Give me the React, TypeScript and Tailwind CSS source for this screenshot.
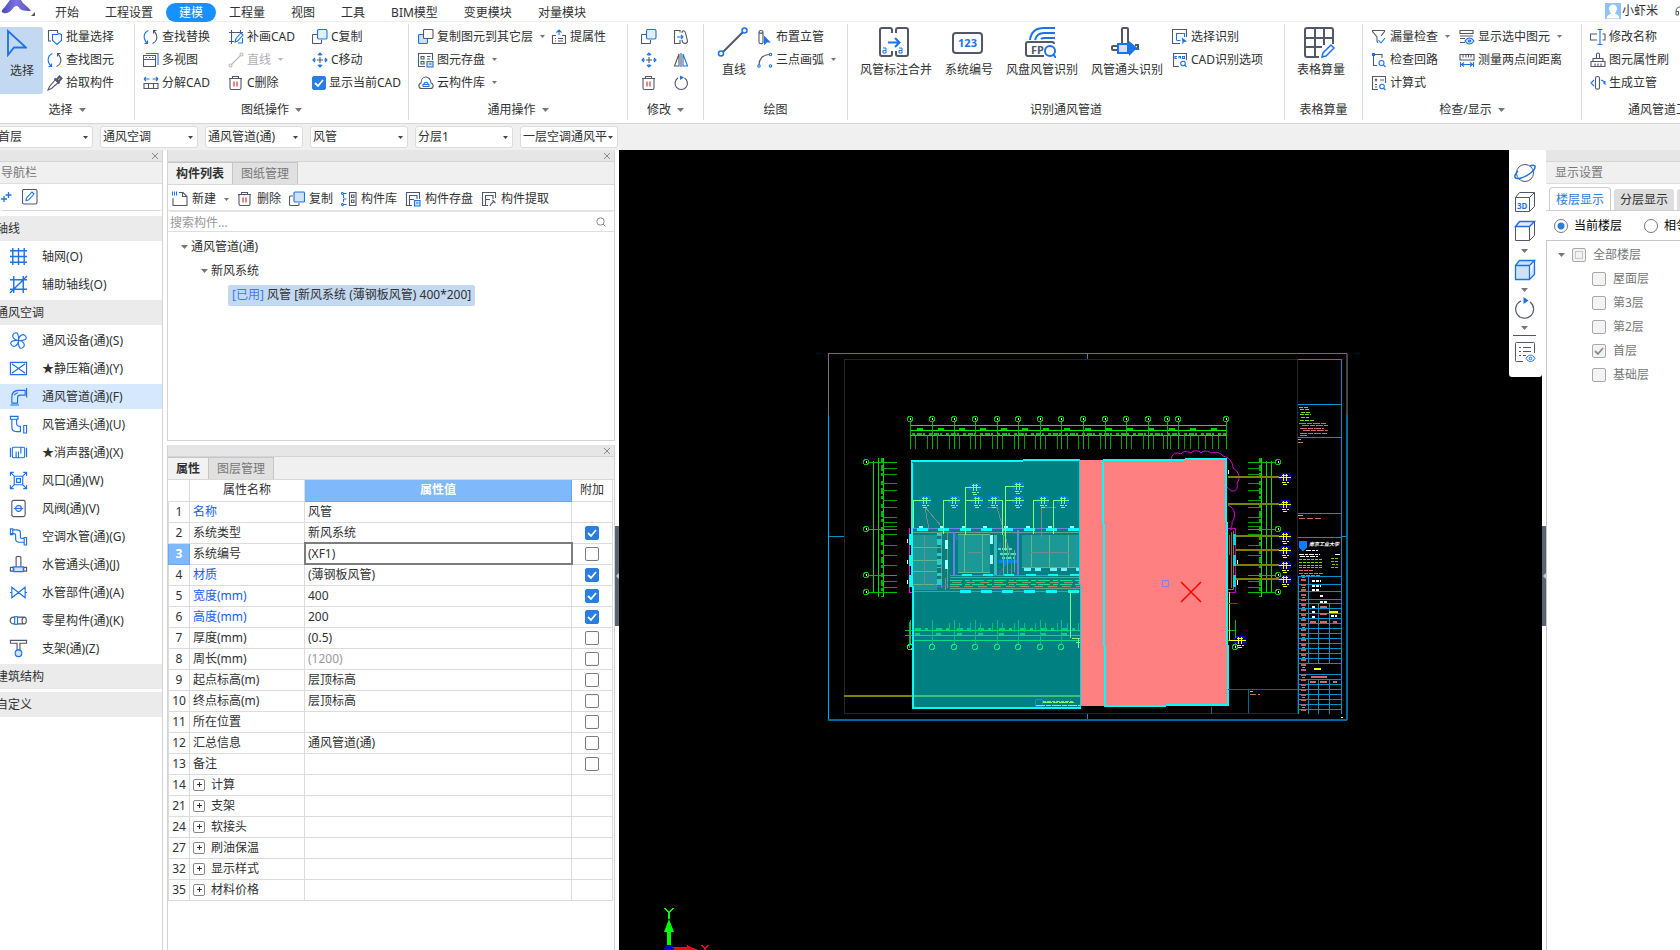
import React, { useState } from "react";

const D = "#52586b";
const B = "#1a73e8";

const icons: Record<string, React.ReactNode> = {
  batch: (
    <>
      <path d="M4 12H1.500V1.500h9V4" stroke={D} />
      <path d="M5.500 5.500h5l1-1 3 1v6l-4.500 4-4.500-4z" stroke={B} fill="#fff" />
    </>
  ),
  find: (
    <>
      <path d="M5.500 1.500C2 3 .5 6 1.500 10c.5 2 1.500 3 3 4.500M1.500 14.500h3v-3" stroke={B} />
      <path d="M9.500 14.500c3.500-1.500 5-4.500 4-8.500-.5-2-1.500-3-3-4.500M13.500 1.500h-3v3" stroke={D} />
    </>
  ),
  dropper: (
    <>
      <path d="M9 4l3 3L4.500 13.500 1 15l1.500-3.500z" stroke={D} />
      <path d="M7.500 3.500l5 5M9.500 5l3-3.500 2 2L11 7z" stroke={D} strokeWidth="2" />
    </>
  ),
  multi: (
    <>
      <path d="M3 1.500h12V13" stroke={B} />
      <path d="M.500 3.500h12v11h-12zM.500 7.500h12M2.500 5.500h1.500M6 5.500h1.500M9 5.500h1.500" stroke={D} />
    </>
  ),
  explode: (
    <>
      <path d="M6.500 4H1m0 0l2-2M1 4l2 2M9.500 4H15m0 0l-2-2M15 4l-2 2" stroke={B} />
      <path d="M1 8.500h14v5H1zM5.500 8.500v5M10.500 8.500v5" stroke={D} />
    </>
  ),
  patch: (
    <>
      <path d="M3.500 1v14M1 3.500h14M12.500 1v3M1 12.500h5" stroke={D} />
      <path d="M7 13l1-3.500L13 4l2 2-5.500 6zM10 14h4.500V9" stroke={B} />
    </>
  ),
  lineOff: (
    <>
      <path d="M3.500 12.500l9-9" stroke="#b8b8b8" />
      <circle cx="2.500" cy="13.500" r="1.500" stroke="#b8b8b8" />
      <circle cx="13.500" cy="2.500" r="1.500" stroke="#b8b8b8" />
    </>
  ),
  trash: (
    <>
      <path d="M1 3.500h13M4.500 3V1.500h6V3M2 4v9q0 1.500 1.500 1.500h8q1.500 0 1.500-1.500V4" stroke={D} />
      <path d="M6 6.500v5M9 6.500v5" stroke="#e02020" />
    </>
  ),
  copy: (
    <>
      <path d="M6 5.500H1q-.5 0-.5.500v8q0 .500.500.500h8q.5 0 .5-.500V11" stroke={D} />
      <rect x="5.500" y=".500" width="9.500" height="9.500" rx="1.500" stroke={B} fill="#e3eefc" />
    </>
  ),
  copyFloor: (
    <>
      <rect x=".500" y="5.500" width="9" height="9" rx="1" stroke={B} fill="#cfe1fb" />
      <rect x="5.500" y=".500" width="9.500" height="9" rx="1" stroke={D} fill="#fff" />
    </>
  ),
  move: (
    <>
      <path d="M8 5v6M5 8h6" stroke={D} />
      <path d="M8 4V1M6 3l2-2 2 2M8 12v3M6 13l2 2 2-2M4 8H1M3 6L1 8l2 2M12 8h3M13 6l2 2-2 2" stroke={B} />
    </>
  ),
  lift: (
    <>
      <path d="M8 6V1M5.500 3.500L8 1l2.500 2.500" stroke={B} />
      <path d="M5 6.500H1.500v8h13v-8H11M4 9.500h1M7 9.500h5M4 12h1M7 12h5" stroke={D} />
    </>
  ),
  save: (
    <>
      <path d="M7 14.500H.500v-13h14V8M3 4.500h3v2.500H3zM9 4.500h3.500M9 7h3M3 9.500h3V12H3z" stroke={D} />
      <path d="M9 9.500h6v5.500H9zM11 12h2.500" stroke={B} fill="#cfe1fb" />
    </>
  ),
  cloud: (
    <>
      <path d="M4 13.500C0 13.500 0 9 3 8 3 0 12 0 13 8c3 1 3 5.500-1 5.500z" stroke={D} />
      <path d="M5 11.500h6v-2H5zM6 9.500c0-3 4-3 4 0" stroke={B} />
    </>
  ),
  stretch: (
    <>
      <path d="M7 3.500V1.500H1.500v13H7V11" stroke={D} />
      <path d="M9 4c0-3 3-3 3.500 0l2 8c0 3-4 3-5 1l-.5-2" stroke={D} />
      <path d="M4 8h6M8 6l2 2-2 2" stroke={B} />
    </>
  ),
  mirror: (
    <>
      <path d="M6 2v12H1.500z" stroke={D} />
      <path d="M10 2v12h4.500z" stroke={B} />
      <path d="M8 1v14" stroke={D} />
    </>
  ),
  rotate: (
    <>
      <path d="M5 3a6.200 6.200 0 1 0 6.500 0" stroke={D} />
      <path d="M7 .500L11 2.500 7 5z" fill={B} stroke="none" />
    </>
  ),
  pipe: (
    <>
      <path d="M2 3v10.500c0 1.500 4 1.500 4 0V3c0-2-4-2-4 0zm0 0c0 1.500 4 1.500 4 0" stroke={D} />
      <path d="M7.500 8l5 5-3 0-2 2z" fill={B} stroke={B} />
    </>
  ),
  arc: (
    <>
      <path d="M2 13C2 7 6 2.500 12 2.500" stroke={D} />
      <circle cx="2" cy="14" r="1.200" stroke={B} />
      <circle cx="13.500" cy="2.500" r="1.200" stroke={B} />
      <circle cx="13.500" cy="14" r="1.200" stroke={B} />
    </>
  ),
  pickRec: (
    <>
      <path d="M8 14.500H.500V.500h14V8" stroke={D} />
      <path d="M4.500 11V4.500h8V8M4.500 11.500h4" stroke={B} />
      <path d="M10 8.500l5 4-3 .5-1.500 2.500z" fill={B} stroke="none" />
    </>
  ),
  cadOpt: (
    <>
      <path d="M7 14.500H1.500v-13h13V8" stroke={D} />
      <path d="M5 4.500H3v2h2M7 6.500v-2h1.500v2M10.500 4.500h2v2h-2z" stroke={B} />
      <circle cx="11" cy="11.500" r="2.300" stroke={B} />
      <path d="M12.500 13l2 2" stroke={B} />
    </>
  ),
  filter: (
    <>
      <path d="M7 14L6 12V8L1.500 2.500v-1h12v1L10 7" stroke={D} />
      <path d="M7.500 11l2.500 3 4-5" stroke={B} />
    </>
  ),
  loop: (
    <>
      <path d="M6 13.500H2.500v-11H11V6" stroke={D} />
      <path d="M1 1h3v3H1z" fill={B} stroke="none" />
      <circle cx="10.500" cy="11" r="2.500" stroke={B} />
      <path d="M12.500 13l2 2" stroke={B} />
    </>
  ),
  formula: (
    <>
      <path d="M7 14.500H1.500v-13h13V8M4 4l2 2M6 4L4 6M9 5h4M4 9.500h2M4 12h2" stroke={D} />
      <circle cx="11" cy="11.500" r="2.300" stroke={B} />
      <path d="M13 13.500l1.500 1.500" stroke={B} />
    </>
  ),
  showSel: (
    <>
      <path d="M1 1.500h13v3H1zM1 7h13M6 9.500H1M6 13.500H1" stroke={D} />
      <path d="M6 12c2.500-4 6.500-4 9 0-2.500 4-6.500 4-9 0z" stroke={B} fill="#cfe1fb" />
      <circle cx="10.500" cy="12" r="1" stroke={B} />
    </>
  ),
  measure: (
    <>
      <path d="M1 2.500h14v5.500H1zM4 3v2.500M7 3v2.500M9.500 3v2.500M12 3v2.500" stroke={D} />
      <path d="M1.500 10v5M14.500 10v5M2 12.500h12M5 10.500l-2.500 2 2.500 2M11 10.500l2.500 2-2.500 2" stroke={B} />
    </>
  ),
  rename: (
    <>
      <path d="M7 5H.500v6H7M12.500 5H15v6h-2.500" stroke={D} />
      <path d="M10 1v14M7.500 .500h5M7.500 15.500h5" stroke={B} />
    </>
  ),
  brush: (
    <path d="M6.500 6V2.500c0-2 3-2 3 0V6M3 6.500h10v3H3zM1 9.500h14v5H1zM5 14v-2.500M8 14v-2.500M11 14v-2.500" stroke={D} />
  ),
  riser: (
    <>
      <path d="M5.500 3v10c0 1.500 4 1.500 4 0V3c0-2-4-2-4 0z" stroke={D} />
      <path d="M4 5L1 8l3 3M11 5c3 1 4 2 4 4l-1.500-1.500M15 9V6" stroke={B} />
    </>
  ),
  newDoc: (
    <>
      <path d="M7 1.500h4l4 4v9H1V7M10.500 1.500v4H15" stroke={D} />
      <path d="M0 1.500h5M0 3.500h5" stroke={B} strokeWidth="2" strokeDasharray="1 1" />
    </>
  ),
  copyBlue: (
    <>
      <path d="M4 5H1.500q-1 0-1 1v7.500q0 1 1 1H9q1 0 1-1V12" stroke={D} />
      <rect x="5" y="1" width="10.500" height="10" rx="1" stroke={B} fill="#cfe1fb" />
    </>
  ),
  lib: (
    <>
      <path d="M2.500 2.500h4M2.500 8h4M2.500 13.500h4M2.500 4v8" stroke={B} strokeDasharray="3 1" />
      <circle cx="1.500" cy="2.500" r="1" stroke={B} />
      <circle cx="1.500" cy="13.500" r="1" stroke={B} />
      <path d="M8.500 1.500H15v13H8.500zM10.500 4H13v2.500h-2.500zM10.500 9H13v2.500h-2.500z" stroke={D} />
    </>
  ),
  disk: (
    <>
      <path d="M7 14.500H1.500v-13h13V8M4.500 14V4.500H12V8M4.500 8.500H9" stroke={D} />
      <path d="M9.500 9.500H15V15H9.500zM11 12h2.500" stroke={B} fill="#cfe1fb" />
    </>
  ),
  extract: (
    <>
      <path d="M7 14.500H1.500v-13h13V7M4.500 14V4.500H12V8M4.500 8.500H9" stroke={D} />
      <path d="M9 15l1-2 3-3M11.500 9l3 3" stroke={D} />
    </>
  ),
  plusPlus: <path d="M4 7v6M1 10h6M8.500 3v6M5.500 6h6" stroke={B} strokeWidth="1.300" />,
  editBox: (
    <>
      <rect x=".500" y=".500" width="14.500" height="14.500" rx="1.500" stroke={D} />
      <path d="M4 11.500l.5-2.500 5.500-6 2 2-5.500 6z" stroke={B} />
    </>
  ),
};

// icons of the navigation list, drawn on a 20px grid
const navIcons: Record<string, React.ReactNode> = {
  grid: <path d="M4 1v18M10 1v18M16 1v18M1 4h18M1 10h18M1 16h18" stroke={B} strokeWidth="1.500" />,
  gridAux: <path d="M5 1v18M15 1v18M1 5h18M1 15h18M1 19L19 1" stroke={B} strokeWidth="1.500" />,
  fan: (
    <path
      d="M10 10C5 10 2 5 5.500 2.500 9 0 10.500 5 10 10zm0 0c0-5 5-8 7.500-4.500S15 10.500 10 10zm0 0c5 0 8 5 4.500 7.500S9.500 15 10 10zm0 0c0 5-5 8-7.500 4.500S5 9.500 10 10z"
      stroke={B}
    />
  ),
  box: <path d="M1.500 3.500h17v13h-17zM3 5l14 10M17 5L3 15" stroke={B} />,
  duct: <path d="M1.500 19h9M3 17v-6.500C3 6 6 3.500 10 3.500h7v5h-5c-2 0-3 1-3 3V17zM18.500 1v10M5.500 8.500c1-1.500 2-2 4-2.500" stroke={B} />,
  elbow: <path d="M1.500 1.500h8v3h-8zM3 5v8c0 3 2 4.500 5 4.500h4v-5.500c-3 0-4-1-4-3V5M15.500 11h3v8h-3z" stroke={B} />,
  silencer: <path d="M1.500 5v10M18.500 5v10M5 4.500h10q1.500 0 1.500 1.500v8q0 1.500-1.500 1.500H5q-1.500 0-1.500-1.500V6q0-1.500 1.500-1.500zM7.500 9v6M10 9v6M12.500 5v6" stroke={B} />,
  vent: <path d="M1.500 5V1.500H5M15 1.500h3.500V5M18.500 15v3.500H15M5 18.500H1.500V15M2 2l4 4M18 2l-4 4M2 18l4-4M18 18l-4-4M5.500 5.500h9v9h-9zM8 8h4v4H8z" stroke={B} />,
  valve: (
    <>
      <rect x="3" y="1.500" width="14" height="17" rx="2" stroke={D} />
      <circle cx="10" cy="10" r="3" stroke={B} />
      <path d="M5 10h10" stroke={B} />
    </>
  ),
  water: <path d="M1.500 2v6M4 3h4c3 0 4 1 4 3v5c0 1 .5 1 2 1h2M2 7h3c1.500 0 2 .5 2 2v4c0 2 1 3 4 3h5M16 11v8h2.500v-8zM1.500 2H4v6H1.500z" stroke={B} />,
  tee: (
    <>
      <path d="M7.500 12V3c0-2 5-2 5 0v9M1.500 13h3v4h-3zM15.500 13h3v4h-3z" stroke={D} />
      <path d="M5 12.500h10v5H5z" stroke={B} fill="#cfe1fb" />
    </>
  ),
  butterfly: <path d="M1 10h2M17 10h2M3 4.500l14 11v-11L3 15.500z" stroke={B} />,
  misc: (
    <>
      <path d="M5 6.500h11c3 0 3 7 0 7H5c-5 0-5-7 0-7zM16 6.500c-3 0-3 7 0 7" stroke={D} />
      <path d="M6 6h3v8H6z" stroke={B} fill="#fff" />
    </>
  ),
  hanger: (
    <>
      <path d="M1.500 1.500h17v3h-7V12h-3V4.500h-7z" stroke={D} />
      <circle cx="10" cy="15" r="3.500" stroke={B} fill="#cfe1fb" />
    </>
  ),
};

const Icon = ({ name }: { name: string }) => (
  <svg className="w-4 h-4 shrink-0" viewBox="0 0 16 16" fill="none" strokeWidth="1.100" aria-hidden="true">
    {icons[name]}
  </svg>
);

const Caret = () => (
  <svg className="w-[7px] h-1 shrink-0" viewBox="0 0 7 4" aria-hidden="true">
    <path d="M0 0h7L3.500 4z" fill="#777" />
  </svg>
);

const SmallCaret = ({ light = false }: { light?: boolean }) => (
  <svg className="w-[5px] h-[3px] ml-1 shrink-0" viewBox="0 0 5 3" aria-hidden="true">
    <path d="M0 0h5L2.500 3z" fill={light ? "#b8b8b8" : "#777"} />
  </svg>
);

interface CheckProps {
  id: string;
  label?: string;
  initial?: boolean;
  disabled?: boolean;
  partial?: boolean;
}

const Check = ({ id, label, initial = false, disabled = false, partial = false }: CheckProps) => {
  const [checked, setChecked] = useState(initial);
  return (
    <span className="grid w-[14px] h-[14px] shrink-0">
      <input
        id={id}
        type="checkbox"
        aria-label={label}
        disabled={disabled}
        checked={checked}
        onChange={(e) => setChecked(e.target.checked)}
        className="[grid-area:1/1] appearance-none w-[14px] h-[14px] rounded-[2px] border border-[#7d7d7d] bg-white checked:bg-[#2a7de1] checked:border-[#2a7de1] disabled:border-[#a8a8a8] disabled:bg-[#f3f3f3] disabled:checked:bg-[#f3f3f3] disabled:checked:border-[#a8a8a8]"
      />
      {checked && (
        <svg className="[grid-area:1/1] w-[14px] h-[14px] pointer-events-none" viewBox="0 0 14 14" fill="none">
          <path d="M3 7l3 3 5-6" stroke={disabled ? "#8c8c8c" : "#fff"} strokeWidth="1.800" />
        </svg>
      )}
      {partial && <span className="[grid-area:1/1] m-[3px] border border-[#c8c8c8] pointer-events-none"></span>}
    </span>
  );
};

interface ToolProps {
  icon: string;
  text?: string;
  caret?: boolean;
  off?: boolean;
  roomy?: boolean;
}

const Tool = ({ icon, text, caret, off, roomy }: ToolProps) => (
  <button
    disabled={off}
    aria-label={text ? undefined : icon}
    className={`flex items-center h-[23px] whitespace-nowrap ${roomy ? "gap-1" : "gap-[3px]"} ${
      off ? "text-[#b0b0b0]" : ""
    }`}
  >
    <Icon name={icon} />
    {text && <span>{text}</span>}
    {caret && <SmallCaret light={off} />}
  </button>
);

interface BigToolProps {
  text: string;
  children: React.ReactNode;
}

const BigTool = ({ text, children }: BigToolProps) => (
  <button className="flex flex-col items-center h-[69px] whitespace-nowrap">
    <svg className="w-8 h-8 mt-[2px] mb-1 mr-1" viewBox="0 0 32 32" fill="none" strokeWidth="2" aria-hidden="true">
      {children}
    </svg>
    <span className="leading-4">{text}</span>
  </button>
);

interface GroupProps {
  title: string;
  width: string;
  caret?: boolean;
  children: React.ReactNode;
}

const Group = ({ title, width, caret, children }: GroupProps) => (
  <section className={`${width} my-[2px] h-[96px] flex flex-col border-r border-[#dcdcdc] shrink-0`}>
    <div className="flex h-[76px]">{children}</div>
    <h2 className="flex items-center justify-center gap-[6px] h-5 whitespace-nowrap">
      {title}
      {caret && <Caret />}
    </h2>
  </section>
);

const menus = ["开始", "工程设置", "建模", "工程量", "视图", "工具", "BIM模型", "变更模块", "对量模块"];

const MenuBar = () => (
  <header className="flex items-center h-[22px] border-b border-[#eeeeee]">
    <svg className="w-[42px] h-[21px] shrink-0" viewBox="0 0 42 21" aria-hidden="true">
      <defs>
        <linearGradient id="logo" x1="0" x2="1">
          <stop offset="0" stopColor="#4a48b8" />
          <stop offset="0.500" stopColor="#7d73e0" />
          <stop offset="1" stopColor="#5853b5" />
        </linearGradient>
      </defs>
      <path d="M10 0H21L23 3c2 2 5 4 8 8-4 0-8 0-11-2-2-3-3-4-6-2C11 11 8 14 4 13 1 13 1 10 4 8z" fill="url(#logo)" />
      <path d="M35 12v4h-4z" fill="#555" />
    </svg>
    <nav className="flex items-center">
      {menus.map((m) => (
        <button
          key={m}
          className={`px-[13px] h-[19px] mt-[3px] rounded-full leading-[19px] whitespace-nowrap ${
            m === "建模" ? "bg-[#1890ff] text-white" : ""
          }`}
        >
          {m}
        </button>
      ))}
    </nav>
    <div className="ml-auto flex items-center pt-px whitespace-nowrap">
      <svg className="w-4 h-4 mr-px" viewBox="0 0 16 16" aria-hidden="true">
        <rect width="16" height="16" fill="#8fc3f8" />
        <path d="M4 6c0-6 8-6 8 0 1 0 0 1-.5 1-.5 3-1.500 3-1.500 4 3 .5 4 2 4.500 4.500h-13C2 13 3 11.500 6 11c0-1-1-1-1.500-4C4 7 3 6 4 6z" fill="#fff" />
      </svg>
      <span>小虾米</span>
      <svg className="w-[6px] h-4 ml-4" viewBox="0 0 6 16" fill="none" aria-hidden="true">
        <path d="M6 4Q2 4 2 9v3h2.500V8.500H2" stroke={D} />
      </svg>
    </div>
  </header>
);

const Ribbon = () => (
  <div className="flex h-[102px] border-b border-[#d6d6d6] overflow-hidden">
    <Group title="选择" width="w-[135px]" caret>
      <button className="flex flex-col items-start w-[43px] h-[67px] mt-[3px] pl-[7px] bg-[#c3d9f1] rounded-r-[3px] shrink-0">
        <svg className="w-5 h-7 mt-[2px]" viewBox="0 0 20 28" fill="none" aria-hidden="true">
          <path d="M1 2v24l6-7.500h12z" stroke={B} strokeWidth="1.800" />
        </svg>
        <span className="pl-[3px] mt-[6px] leading-4">选择</span>
      </button>
      <div className="pl-1 pt-px">
        <Tool icon="batch" text="批量选择" />
        <Tool icon="find" text="查找图元" />
        <Tool icon="dropper" text="拾取构件" />
      </div>
    </Group>
    <Group title="图纸操作" width="w-[274px]" caret>
      <div className="pl-2 pt-px w-[93px]">
        <Tool icon="find" text="查找替换" />
        <Tool icon="multi" text="多视图" />
        <Tool icon="explode" text="分解CAD" />
      </div>
      <div className="pt-px w-[84px]">
        <Tool icon="patch" text="补画CAD" />
        <Tool icon="lineOff" text="直线" caret off />
        <Tool icon="trash" text="C删除" />
      </div>
      <div className="pt-px">
        <Tool icon="copy" text="C复制" />
        <Tool icon="move" text="C移动" />
        <div className="flex items-center gap-[3px] h-[23px] whitespace-nowrap">
          <Check id="show-cad" initial />
          <label htmlFor="show-cad">显示当前CAD</label>
        </div>
      </div>
    </Group>
    <Group title="通用操作" width="w-[219px]" caret>
      <div className="pl-[9px] pt-px w-[142px]">
        <Tool icon="copyFloor" text="复制图元到其它层" caret />
        <Tool icon="save" text="图元存盘" caret />
        <Tool icon="cloud" text="云构件库" caret />
      </div>
      <div className="pt-px">
        <Tool icon="lift" text="提属性" />
      </div>
    </Group>
    <Group title="修改" width="w-[76px]" caret>
      <div className="pl-[13px] pt-px w-[45px]">
        <Tool icon="copy" />
        <Tool icon="move" />
        <Tool icon="trash" />
      </div>
      <div className="pt-px">
        <Tool icon="stretch" />
        <Tool icon="mirror" />
        <Tool icon="rotate" />
      </div>
    </Group>
    <Group title="绘图" width="w-[144px]">
      <div className="pl-3 w-[53px]">
        <BigTool text="直线">
          <path d="M7 26L27 6" stroke={D} />
          <circle cx="5" cy="27.500" r="2.500" stroke={B} strokeWidth="1.500" />
          <circle cx="28.500" cy="4.500" r="2.500" stroke={B} strokeWidth="1.500" />
        </BigTool>
      </div>
      <div className="pt-px">
        <Tool icon="pipe" text="布置立管" />
        <Tool icon="arc" text="三点画弧" caret />
      </div>
    </Group>
    <Group title="识别通风管道" width="w-[437px]">
      <div className="flex pl-3 gap-[13px] w-[324px]">
        <BigTool text="风管标注合并">
          <path d="M14 7V4q0-2-2-2H4Q2 2 2 4v24q0 2 2 2h8q2 0 2-2v-3M18 7V4q0-2 2-2h8q2 0 2 2v24q0 2-2 2h-8q-2 0-2-2v-3" stroke={D} />
          <path d="M10 16.500h11M17 12l4.500 4.500L17 21" stroke={B} />
          <path d="M5 22h3v5H5v-2.500h3M21 22h3v5h-3v-2.500h3" stroke={B} strokeWidth="1" />
        </BigTool>
        <BigTool text="系统编号">
          <rect x="2" y="7" width="29" height="20" rx="3" stroke={D} />
          <text x="16.500" y="21" fontSize="11" fontWeight="bold" textAnchor="middle" fill={B} stroke="none">
            123
          </text>
        </BigTool>
        <BigTool text="风盘风管识别">
          <path d="M6 14C7 6 12 2 20 2h11M11 14c1-4 4-7 9-7h11M17 13c1-1 2-1 4-1h10" stroke={B} />
          <path d="M20 30H4q-2 0-2-2V18q0-2 2-2h24q2 0 2 2" stroke={D} />
          <text x="7" y="27.500" fontSize="11" fontWeight="bold" fill={D} stroke="none">
            FP
          </text>
          <circle cx="26" cy="25" r="5" stroke={B} fill="#fff" />
          <path d="M29 28l3 4" stroke={B} />
        </BigTool>
        <BigTool text="风管通头识别">
          <path d="M13 18V3q0-1 1-1h4q1 0 1 1v15M9 20H4q-1 0-1 1v2q0 1 1 1h5" stroke={D} />
          <path d="M9 18h10v9H9z" stroke={B} fill="#cfe1fb" />
          <path d="M20 15l11 9h-5l-6 6z" fill={B} />
          <path d="M26 19h3v4" stroke={D} />
        </BigTool>
      </div>
      <div className="pt-px">
        <Tool icon="pickRec" text="选择识别" />
        <Tool icon="cadOpt" text="CAD识别选项" />
      </div>
    </Group>
    <Group title="表格算量" width="w-[78px]">
      <div className="pl-3">
        <BigTool text="表格算量">
          <path d="M16 31H4q-2 0-2-2V4q0-2 2-2h24q2 0 2 2v14M2 12h28M2 21h17M12 2v28M21 2v17" stroke={D} />
          <path d="M19 31l1-4 8-8 3 3-8 8z" stroke={B} strokeWidth="1.500" />
        </BigTool>
      </div>
    </Group>
    <Group title="检查/显示" width="w-[219px]" caret>
      <div className="pl-2 pt-px w-[96px]">
        <Tool icon="filter" text="漏量检查" caret />
        <Tool icon="loop" text="检查回路" />
        <Tool icon="formula" text="计算式" />
      </div>
      <div className="pt-px">
        <Tool icon="showSel" text="显示选中图元" caret />
        <Tool icon="measure" text="测量两点间距离" />
      </div>
    </Group>
    <section className="my-[2px] h-[96px] flex flex-col flex-1 min-w-0 overflow-hidden">
      <div className="flex flex-col h-[76px] pl-2 pt-px">
        <Tool icon="rename" text="修改名称" />
        <Tool icon="brush" text="图元属性刷" />
        <Tool icon="riser" text="生成立管" />
      </div>
      <h2 className="h-5 pl-[46px] leading-5 whitespace-nowrap">通风管道工具</h2>
    </section>
  </div>
);

const combos = ["首层", "通风空调", "通风管道(通)", "风管", "分层1", "一层空调通风平"];

const ComboBar = () => (
  <div className="flex items-center gap-[7px] h-[26px] bg-[#f0f0f0] overflow-hidden">
    {combos.map((c, i) => (
      <div
        key={c}
        className={`grid items-center w-[98px] h-[22px] bg-white border border-[#dcdcdc] rounded-[3px] shrink-0 ${
          i === 0 ? "-ml-[5px]" : ""
        }`}
      >
        <select aria-label={c} className="[grid-area:1/1] w-full h-5 pl-[2px] pr-2 appearance-none bg-transparent">
          <option>{c}</option>
        </select>
        <svg className="[grid-area:1/1] w-[5px] h-[3px] justify-self-end mr-1 pointer-events-none" viewBox="0 0 5 3">
          <path d="M0 0h5L2.500 3z" fill="#444" />
        </svg>
      </div>
    ))}
  </div>
);

const PanelBar = ({ name }: { name: string }) => (
  <div className="flex items-center justify-end h-3 pr-[3px] bg-[#e6e6e6] border-b border-[#d4d4d4] shrink-0">
    {name && (
      <button aria-label={`关闭${name}`} className="w-2 h-2">
        <svg className="w-2 h-2" viewBox="0 0 8 8" fill="none">
          <path d="M1 1l6 6M7 1L1 7" stroke="#8a8a8a" />
        </svg>
      </button>
    )}
  </div>
);

const nav = [
  { text: "轴线" },
  { text: "轴网(O)", icon: "grid" },
  { text: "辅助轴线(O)", icon: "gridAux" },
  { text: "通风空调" },
  { text: "通风设备(通)(S)", icon: "fan" },
  { text: "★静压箱(通)(Y)", icon: "box" },
  { text: "通风管道(通)(F)", icon: "duct" },
  { text: "风管通头(通)(U)", icon: "elbow" },
  { text: "★消声器(通)(X)", icon: "silencer" },
  { text: "风口(通)(W)", icon: "vent" },
  { text: "风阀(通)(V)", icon: "valve" },
  { text: "空调水管(通)(G)", icon: "water" },
  { text: "水管通头(通)(J)", icon: "tee" },
  { text: "水管部件(通)(A)", icon: "butterfly" },
  { text: "零星构件(通)(K)", icon: "misc" },
  { text: "支架(通)(Z)", icon: "hanger" },
  { text: "建筑结构" },
  { text: "自定义" },
];

const NavPanel = () => {
  const [current, setCurrent] = useState("通风管道(通)(F)");
  return (
    <aside className="flex flex-col w-[163px] border-r border-[#d4d4d4] shrink-0">
      <PanelBar name="导航栏" />
      <h2 className="h-[22px] pl-px leading-[22px] bg-[#f0f0f0] border-b border-[#dedede] text-[#777]">导航栏</h2>
      <div className="flex items-center gap-[6px] h-[27px] border-b border-[#d8d8d8] rounded-b-[3px]">
        <button aria-label="添加">
          <Icon name="plusPlus" />
        </button>
        <button aria-label="编辑">
          <Icon name="editBox" />
        </button>
      </div>
      <div className="flex flex-col gap-[3px] pt-[5px] overflow-hidden">
        {nav.map((n) =>
          n.icon ? (
            <button
              key={n.text}
              onClick={() => setCurrent(n.text)}
              className={`flex items-center gap-[14px] h-[25px] pl-[9px] shrink-0 whitespace-nowrap ${
                current === n.text ? "bg-[#d5e8fe]" : ""
              }`}
            >
              <svg className="w-[19px] h-[19px] shrink-0" viewBox="0 0 20 20" fill="none" strokeWidth="1.200" aria-hidden="true">
                {navIcons[n.icon]}
              </svg>
              {n.text}
            </button>
          ) : (
            <h3 key={n.text} className="h-[25px] leading-[25px] bg-[#ebebeb] shrink-0 overflow-hidden">
              <span className="-ml-1">{n.text}</span>
            </h3>
          )
        )}
      </div>
    </aside>
  );
};

interface TabsProps {
  items: string[];
}

const Tabs = ({ items }: TabsProps) => (
  <div className="flex h-[23px] bg-[#f0f0f0] border-b border-[#d8d8d8] shrink-0" role="tablist">
    {items.map((t, i) => (
      <button
        key={t}
        role="tab"
        aria-selected={i === 0}
        className={`px-2 border-r border-t border-[#c4c6ca] leading-[21px] ${
          i === 0 ? "font-bold bg-[#f2f2f2]" : "bg-[#e0e0e0] text-[#777]"
        }`}
      >
        {t}
      </button>
    ))}
  </div>
);

const ComponentPanel = () => (
  <section className="flex flex-col h-[291px] border border-t-0 border-[#d4d4d4] shrink-0">
    <PanelBar name="构件列表" />
    <Tabs items={["构件列表", "图纸管理"]} />
    <div className="flex items-center gap-2 h-[27px] pl-1 pt-[3px] border-b-2 border-[#e4e4e4] rounded-b-[3px] shrink-0">
      <Tool icon="newDoc" text="新建" caret roomy />
      <Tool icon="trash" text="删除" roomy />
      <Tool icon="copyBlue" text="复制" roomy />
      <Tool icon="lib" text="构件库" roomy />
      <Tool icon="disk" text="构件存盘" roomy />
      <Tool icon="extract" text="构件提取" roomy />
    </div>
    <div className="flex items-center h-[20px] pl-[2px] pr-2 pt-px border-b border-[#dedede] shrink-0">
      <input aria-label="搜索构件" placeholder="搜索构件..." className="flex-1 h-[18px] pt-px outline-none placeholder:text-[#999]" />
      <svg className="w-[10px] h-[10px]" viewBox="0 0 10 10" fill="none" stroke="#8a8a8a" aria-hidden="true">
        <circle cx="4.500" cy="4.500" r="3.700" />
        <path d="M7 7l2.500 2.500" />
      </svg>
    </div>
    <ul className="pt-[3px]">
      <li className="flex items-center gap-[3px] h-6 pl-[13px]">
        <Caret />
        通风管道(通)
      </li>
      <li className="flex items-center gap-[3px] h-6 pl-[33px]">
        <Caret />
        新风系统
      </li>
      <li className="flex items-center h-6 pl-[60px]">
        <button className="h-[21px] px-1 rounded-[2px] bg-[#c3d9f1] whitespace-nowrap">
          <span className="text-[#3d7be8]">[已用]</span> 风管 [新风系统 (薄钢板风管) 400*200]
        </button>
      </li>
    </ul>
  </section>
);

interface Prop {
  no: number;
  name: string;
  value?: string;
  add?: boolean;
  blue?: boolean;
  group?: boolean;
}

const props: Prop[] = [
  { no: 1, name: "名称", value: "风管", blue: true },
  { no: 2, name: "系统类型", value: "新风系统", add: true },
  { no: 3, name: "系统编号", value: "(XF1)", add: false },
  { no: 4, name: "材质", value: "(薄钢板风管)", add: true, blue: true },
  { no: 5, name: "宽度(mm)", value: "400", add: true, blue: true },
  { no: 6, name: "高度(mm)", value: "200", add: true, blue: true },
  { no: 7, name: "厚度(mm)", value: "(0.5)", add: false },
  { no: 8, name: "周长(mm)", value: "(1200)", add: false },
  { no: 9, name: "起点标高(m)", value: "层顶标高", add: false },
  { no: 10, name: "终点标高(m)", value: "层顶标高", add: false },
  { no: 11, name: "所在位置", add: false },
  { no: 12, name: "汇总信息", value: "通风管道(通)", add: false },
  { no: 13, name: "备注", add: false },
  { no: 14, name: "计算", group: true },
  { no: 21, name: "支架", group: true },
  { no: 24, name: "软接头", group: true },
  { no: 27, name: "刷油保温", group: true },
  { no: 32, name: "显示样式", group: true },
  { no: 35, name: "材料价格", group: true },
];

const PropertyPanel = () => (
  <section className="flex flex-col flex-1 mt-1 border-x border-[#d4d4d4] overflow-hidden">
    <PanelBar name="属性" />
    <Tabs items={["属性", "图层管理"]} />
    <table className="w-[445px] table-fixed border-collapse leading-5">
      <colgroup>
        <col className="w-[21px]" />
        <col className="w-[115px]" />
        <col />
        <col className="w-[41px]" />
      </colgroup>
      <thead>
        <tr className="h-[21px]">
          <th className="border-r border-b border-[#dcdcdc] p-0"></th>
          <th className="border-r border-b border-[#dcdcdc] p-0 font-normal">属性名称</th>
          <th className="border-x border-b border-[#6aa9f0] p-0 bg-[#80b9fb] text-white font-bold">属性值</th>
          <th className="border-x border-b border-[#dcdcdc] p-0 font-normal">附加</th>
        </tr>
      </thead>
      <tbody>
        {props.map((p) => (
          <tr key={p.no} className="h-[21px]">
            <td
              className={`border p-0 text-center ${
                p.no === 3 ? "bg-[#80b9fb] border-[#6aa9f0] text-white font-bold" : "border-[#dcdcdc]"
              }`}
            >
              {p.no}
            </td>
            <td className={`border border-[#dcdcdc] p-0 pl-[3px] ${p.blue ? "text-[#1460f5]" : ""}`}>
              {p.group ? (
                <span className="flex items-center gap-[6px]">
                  <button
                    aria-label={`展开${p.name}`}
                    className="flex items-center justify-center w-3 h-3 border border-[#888] rounded-[2px]"
                  >
                    <svg className="w-[5px] h-[5px]" viewBox="0 0 5 5">
                      <path d="M0 2.500h5M2.500 0v5" stroke="#333" />
                    </svg>
                  </button>
                  {p.name}
                </span>
              ) : (
                p.name
              )}
            </td>
            <td
              className={`border border-[#dcdcdc] p-0 pl-[3px] ${
                p.no === 3 ? "outline-2 -outline-offset-1 outline-[#7d7d7d]" : ""
              } ${p.no === 8 ? "text-[#999]" : ""}`}
            >
              {p.value}
            </td>
            <td className="border border-[#dcdcdc] p-0">
              {p.add !== undefined && (
                <div className="flex justify-center">
                  <Check id={`add-${p.no}`} label={`附加${p.name}`} initial={p.add} />
                </div>
              )}
            </td>
          </tr>
        ))}
      </tbody>
    </table>
  </section>
);

const axisX = [910, 932, 954, 975, 997, 1018, 1040, 1061, 1083, 1105, 1126, 1148, 1167, 1178, 1226];
const axisY = [462, 529, 575, 592];
const minorX = [915, 927, 937, 949, 959, 970, 980, 992, 1002, 1014, 1024, 1035, 1045, 1057, 1067, 1078, 1088, 1100, 1110, 1121, 1131, 1143, 1153, 1163, 1170, 1184, 1190, 1198, 1205, 1212, 1218];
const minorY = [468, 474, 483, 490, 500, 507, 517, 522, 526, 534, 545, 555, 565, 581, 587];
const tagsTop = [[975, 487], [1018, 486], [925, 500], [954, 500], [977, 500], [994, 500], [1018, 500], [1043, 500], [1063, 500]];
const tagsRight = [477, 504, 536, 550, 565, 579];
const windows = [917, 938, 960, 981, 1002, 1024, 1046, 1068];
const blockRows = [584, 591, 599, 603, 608, 613, 618, 623, 628, 633, 638, 643, 648, 653, 658, 663, 674, 679, 684, 689, 694, 699, 704, 709];

const Tag = ({ x, y, main, ring }: { x: number; y: number; main: string; ring: string }) => (
  <g>
    <path d={`M${x - 4} ${y - 3}h9M${x - 4} ${y + 3}h9M${x - 5} ${y - 2}v5M${x + 5} ${y - 2}v5`} stroke={ring} strokeWidth="2" />
    <path d={`M${x - 6} ${y + 0.5}h12M${x - 1.500} ${y - 3}v7M${x + 1.500} ${y - 3}v7M${x - 3} ${y - 1.500}h6`} stroke={main} />
    <path d={`M${x - 3} ${y + 5}h7M${x - 2} ${y + 7}h5`} stroke={main} strokeDasharray="4 1" />
  </g>
);

const Bubble = ({ x, y }: { x: number; y: number }) => (
  <g>
    <circle cx={x} cy={y} r="2.500" stroke="#00c800" />
    <path d={`M${x} ${y - 1}v2`} stroke="#d8ffd8" />
  </g>
);

const Drawing = () => (
  <svg className="block w-full h-full" viewBox="619 150 923 800" preserveAspectRatio="xMinYMin slice" fill="none" shapeRendering="crispEdges">
    {/* sheet frame */}
    <path d="M828 353.500h519M1341 536.500h6M828 536.500h16M1087.500 354v5M1087.500 714v6" stroke="#0090cc" />
    <path d="M828.500 415v305" stroke="#00a8ff" />
    <path d="M828.500 354v61" stroke="#777" />
    <path d="M828 720h519M1347 415v305" stroke="#006a96" strokeWidth="2" />
    <path d="M1347 354v61" stroke="#444" strokeWidth="2" />
    <path d="M844.500 359.500h453v354h-453z" stroke="#262626" />
    <path d="M844 696h68" stroke="#808000" strokeWidth="2" />

    {/* horizontal axis */}
    <path d="M910 425.500h317M910 430.500h317M910 435.500h317" stroke="#00f000" />
    <path d="M912 434h314" stroke="#00c000" strokeWidth="2" strokeDasharray="3 2 5 1 2 4" />
    <path d="M917 429h306" stroke="#00d000" strokeWidth="2" strokeDasharray="6 15" />
    {axisX.map((x) => (
      <g key={x}>
        <path d={`M${x + 0.5} 421v28`} stroke="#00b800" />
        <Bubble x={x} y={419} />
      </g>
    ))}
    {minorX.map((x) => (
      <path key={x} d={`M${x + 0.5} 435v14`} stroke="#00a000" />
    ))}

    {/* left and right axes */}
    <path d="M873.500 461v131M878.500 458v139M883.500 458v139" stroke="#00e000" />
    <path d="M882 458v139" stroke="#00b800" strokeWidth="2" strokeDasharray="4 3 6 2 3 5" />
    <path d="M1261.500 458v139M1266.500 461v131M1271.500 461v131" stroke="#00e000" />
    <path d="M1260 458v139" stroke="#00b800" strokeWidth="2" strokeDasharray="4 3 6 2 3 5" />
    {axisY.map((y) => (
      <g key={y}>
        <path d={`M869 ${y + 0.5}h28M1248 ${y + 0.5}h27`} stroke="#00c000" />
        <Bubble x={866} y={y} />
        <Bubble x={1278} y={y} />
      </g>
    ))}
    {minorY.map((y) => (
      <path key={y} d={`M883 ${y + 0.5}h14M1248 ${y + 0.5}h13`} stroke="#00a000" />
    ))}
    <path d="M905 630.500h7M905 635.500h7M909.500 622v26M1235.500 620v28M1228 630.500h8M1228 640.500h8" stroke="#00c000" />
    <Bubble x={1235} y={647} />

    {/* teal zone with the plan below it */}
    <path d="M911 461.500L1080 460l1 247-167 1z" fill="#008080" />
    <path d="M914 696h167" stroke="#40c080" strokeWidth="2" />
    <path d="M913 630.500h167M913 635.500h167M913 640.500h167" stroke="#00e080" />
    <path d="M915 629h164" stroke="#00d080" strokeWidth="2" strokeDasharray="6 4 3 8" />
    <path d="M915 634h164" stroke="#00d080" strokeWidth="2" strokeDasharray="5 16" />
    {axisX.slice(0, 8).map((x) => (
      <g key={x}>
        <path d={`M${x + 0.5} 620v25`} stroke="#00c080" />
        <circle cx={x} cy="647" r="2.500" stroke="#00f080" />
      </g>
    ))}
    {minorX.slice(3, 16).map((x) => (
      <path key={x} d={`M${x + 0.5} 623v9`} stroke="#00c080" />
    ))}
    <path d="M913 535h24v55h-24zM958 535h32v37h-32zM1022 535h58v32h-58z" fill="#1c9896" />
    <path d="M913 547.500h24M913 560h24M913 571h24M913 584h24M964.500 535v37M982.500 535v37M1031.500 535v32M1049.500 535v32M1068.500 535v32M958 572.500h32M1022 567.500h58M958 534.500h32" stroke="#5fb88a" />
    <path d="M924.500 535v50M968 552.500h15M1031 552.500h38M925 507l16 19M925 507l4 23M997 507l14 50v18M1041 507l1 30M987 507h10M1041 507h15" stroke="#758a8a" />
    <path d="M913 532.500h167M950 577.500h130M950 588.500h130" stroke="#6aa08a" />
    <path d="M950 580.500h130M950 584.500h130" stroke="#00e890" strokeDasharray="12 3 5 2" />
    <path d="M952 582.500h128M950 586.500h130" stroke="#a88a70" strokeDasharray="9 5" />
    <path d="M941.500 532v56M947.500 532v56M945.500 578v12" stroke="#8a9070" />
    <path d="M939.500 533v54" stroke="#30c8c8" strokeWidth="5" strokeDasharray="3 3 6 2 1 5" />
    <path d="M946.500 540v35M991.500 535v37" stroke="#a0ffff" strokeWidth="3" strokeDasharray="9 11" />
    <path d="M995.500 535v40" stroke="#38b8b8" strokeWidth="3" />
    <path d="M1024 569.500h56" stroke="#70f0f0" strokeWidth="3" strokeDasharray="7 4 6 9" />
    <path d="M913 528.500h167M913 591.500h167M950 575.500h130" stroke="#6a80e8" />
    <path d="M954 532v43M1018 530v45" stroke="#6a80e8" strokeWidth="2" />
    <path d="M957 540c0-4-2-6-4-7M1000 543c-1 14 8 14 4 24l-5 8M930 575c4 14 12 14 18 8" stroke="#5a70e8" shapeRendering="auto" />
    <path d="M999 561.500h18M1004.500 560v6" stroke="#0088ff" strokeWidth="3" />
    <path d="M998 549h15M1000 554h16M1002 558h12" stroke="#40e8c0" strokeWidth="2" strokeDasharray="3 1 5 2" />
    <path d="M1003.500 535v40M1007.500 545v30M1014.500 550v22" stroke="#60b090" />
    {windows.map((x) => (
      <g key={x} fill="#00ffff">
        <rect x={x} y="528" width="11" height="3" />
        {x > 950 && <rect x={x} y="590" width="11" height="3" />}
        {x > 950 && <rect x={x + 2} y="574" width="10" height="2" />}
        <rect x={x + 2} y="526" width="4" height="2" fill="#a0ffff" />
      </g>
    ))}
    <path d="M975 487h-9.500v48M1018 486h-12.500v65M925 500h-11.500v28M954 500h-10.500v34M994 500h8.500v35M1043 500h-9.500v34M1063 500h-9.500v34M966 500.500h10M1006 500.500h12M1070.500 592v46" stroke="#80ff80" />
    {tagsTop.map(([x, y]) => (
      <Tag key={`${x}-${y}`} x={x} y={y} main="#80ff80" ring="#0080e8" />
    ))}
    <path d="M1072 638.500h8M1076 642.500h5M1078.500 638v10" stroke="#80ff80" />
    <circle cx="1039" cy="703" r="4" stroke="#0090ff" />
    <path d="M1043 702.500h31M1036 705.500h45M1055 708.500h10" stroke="#80ff60" strokeDasharray="9 1 5 1" />
    <path d="M1043 701.500h31" stroke="#80e070" strokeDasharray="3 1 4 1" />
    <path d="M909.500 528v64h4" stroke="#ff00ff" />
    <path d="M911 534v11M911 555v11M911 575v12" stroke="#00ffff" strokeWidth="4" />
    <path d="M907.500 539v4M907.500 560v4M907.500 580v4" stroke="#fff" />
    <path d="M911 461.500L1080 460" stroke="#00ffff" strokeWidth="2" />
    <path d="M911.500 461l2 247h167" stroke="#00ffff" strokeWidth="2" />
    <path d="M1079.500 460l1 247" stroke="#00d8e8" />

    {/* east end of the plan */}
    <path d="M1171 459c2-8 8-6 10-5 2-4 8-2 10-1 2-3 8-3 10 0 2-3 8-2 10 0 4-2 10 0 12 3 8 2 10 8 10 12 6 4 8 10 4 15 2 7-4 12-10 4M1228 505c8 4 8 12 4 17 1 4-2 5-1 8" stroke="#e000e0" shapeRendering="auto" />
    <path d="M1228 528.500h7.500v64H1228" stroke="#c000c0" />
    <path d="M1229.500 535v20M1231.500 532v56" stroke="#b85c00" />
    <path d="M1233.500 531v59M1228 589.500h6" stroke="#8a8000" />
    <path d="M1234.500 534v11M1234.500 555v11M1234.500 575v12" stroke="#00d8e8" strokeWidth="3" />
    <path d="M1237.500 560v5M1237.500 580v5M1228.500 470v4" stroke="#fff" />
    <path d="M1228 477h54M1228 504h54M1236 536h46M1236 550h46M1236 565h46M1236 579h46" stroke="#808000" strokeWidth="2" />
    {tagsRight.map((y) => (
      <Tag key={y} x={1285} y={y} main="#ffff00" ring="#0000c8" />
    ))}
    <path d="M1229.500 592v48h8" stroke="#ffff00" />
    <Tag x={1240} y={640} main="#ffff00" ring="#0000c8" />
    <path d="M1228 603.500h10" stroke="#f00000" />

    {/* pink zones */}
    <path d="M1080 460h24v246h-23z" fill="#ff8080" />
    <path d="M1103 460.500l123-1.500 2 246-123 1z" fill="#ff8080" stroke="#00ffff" strokeWidth="2" />
    <path d="M1181 582l20 20M1201 582l-20 20" stroke="#ff0000" strokeWidth="1.500" shapeRendering="auto" />
    <rect x="1162.500" y="580.500" width="6" height="6" stroke="#8080ff" />

    {/* title block */}
    <path d="M1298 359.500h43v354M1298 404.500h43M1298 437.500h43M1298 513h43M1298 537.500h43M1298 576.500h43" stroke="#0090cc" />
    <path d="M1228 689h70M1211.500 707v7M1248.500 689v24" stroke="#006a96" />
    <path d="M1298.500 576v138M1308.500 576v87M1318.500 604v59M1329.500 604v59M1308.500 679v35M1318.500 679v35M1329.500 679v35" stroke="#0090cc" />
    {blockRows.map((y) => (
      <path key={y} d={`M1298 ${y + 0.5}h43`} stroke="#0090cc" />
    ))}
    <path d="M1299 407.500h10M1300 409.500h10M1301 412.500h9M1300 414.500h11M1301 417.500h8M1300 420.500h14" stroke="#70e000" strokeDasharray="4 1" />
    <path d="M1299 423.500h28M1302 425.500h26M1300 428.500h24M1303 430.500h25M1300 433.500h27M1300 435.500h8" stroke="#d06868" strokeDasharray="7 1 5 1" />
    <path d="M1298 439.500h3M1298 515.500h5M1250 691.500h3" stroke="#70e000" />
    <path d="M1298 442.500h5M1299 518.500h24M1250 694.500h10" stroke="#d06868" strokeDasharray="6 2" />
    <path d="M1299 541q4 1 8 0v6q-1 3-4 4-4-2-4-5z" fill="#0080ff" />
    <text x="1309" y="546" fontSize="5" fontWeight="bold" fontStyle="italic" fill="#fff" stroke="none">
      南京工业大学
    </text>
    <path d="M1306 550.500h12M1299 554.500h21M1300 556.500h18M1335 554.500h5" stroke="#fff" strokeDasharray="5 1 3 1" />
    <path d="M1299 559.500h24M1299 562.500h24M1299 565.500h24M1299 567.500h24M1331 558.500h7M1331 561.500h7M1332 564.500h6M1331 567.500h7" stroke="#70d000" strokeDasharray="3 1" />
    <path d="M1299 570.500h14M1299 573.500h24M1301 575.500h20" stroke="#e06868" strokeDasharray="4 1" />
    <path d="M1312 581h9M1312 586h9M1312 590h8M1320 596h4M1320 602h7M1312 607h4M1312 612h3M1312 617h3M1331 616h6" stroke="#fff" strokeWidth="2" strokeDasharray="3 1" />
    <path d="M1303.500 579v134" stroke="#c06060" strokeWidth="5" strokeDasharray="2 3" />
    <path d="M1303.500 577v134" stroke="#60c000" strokeWidth="3" strokeDasharray="1 9" />
    <path d="M1310 622h6M1320 607h7M1320 614h7M1320 622h7M1333 622h4M1310 682h6M1320 682h7M1333 682h4M1311 677h16" stroke="#d06868" strokeWidth="2" />
    <path d="M1329 612h9M1314 669h7" stroke="#ffff00" strokeWidth="2" />
    <path d="M1341 717.500h2" stroke="#ffff80" />

    {/* axis tripod */}
    <path d="M669 949v-18" stroke="#00ff00" strokeWidth="4" />
    <path d="M664 932l5-13 5 13z" fill="#00ff00" shapeRendering="auto" />
    <path d="M665 908l4 5 4-5M669 913v6" stroke="#00ff00" strokeWidth="1.500" />
    <path d="M672 949h16" stroke="#ff0000" strokeWidth="4" />
    <path d="M687 945l11 5h-11z" fill="#ff0000" />
    <path d="M702 945l3 4 3-4" stroke="#ff0000" strokeWidth="1.500" />
    <circle cx="669" cy="950" r="5" fill="#0000c8" />
  </svg>
);

const ViewTools = () => (
  <div className="absolute top-0 right-0 flex flex-col items-center w-[33px] h-[227px] pt-3 pr-[2px] bg-white rounded-b-[3px]">
    <button aria-label="动态观察" className="h-[22px]">
      <svg className="w-[22px] h-[22px]" viewBox="0 0 22 22" fill="none">
        <circle cx="11" cy="11" r="8.500" stroke={D} />
        <path d="M4 9C-1 14 0 18 7 16c7-2 15-8 14-12-1-1-3-1-5 0" stroke={B} strokeWidth="1.500" />
      </svg>
    </button>
    <button aria-label="三维" className="mt-[7px] h-[22px]">
      <svg className="w-[22px] h-[22px]" viewBox="0 0 22 22" fill="none" stroke={D}>
        <path d="M1.500 6.500h14v14h-14zM1.500 6.500l4-5h15l-5 5M20.500 1.500v14l-5 5" />
        <text x="3" y="18" fontSize="8" fontWeight="bold" fill={B} stroke="none">
          3D
        </text>
      </svg>
    </button>
    <button aria-label="线框" className="mt-[7px] h-[22px]">
      <svg className="w-[22px] h-[22px]" viewBox="0 0 22 22" fill="none">
        <path d="M1.500 6.500v14h14v-14M20.500 1.500v14l-5 5" stroke={D} />
        <path d="M1.500 6.500h14l5-5h-15z" stroke={B} strokeWidth="1.500" fill="#e3eefc" />
      </svg>
    </button>
    <span className="mt-[7px] flex">
      <Caret />
    </span>
    <button aria-label="实体" className="mt-[6px] h-[22px]">
      <svg className="w-[22px] h-[22px]" viewBox="0 0 22 22">
        <path d="M1.500 6.500h14v14h-14zM1.500 6.500l4-5h15l-5 5M20.500 1.500v14l-5 5" stroke={B} strokeWidth="1.300" fill="#cfe1fb" />
      </svg>
    </button>
    <span className="mt-[7px] flex">
      <Caret />
    </span>
    <button aria-label="旋转" className="mt-[5px] h-[22px]">
      <svg className="w-[22px] h-[22px]" viewBox="0 0 22 22" fill="none">
        <path d="M7 4a9 9 0 1 0 9 1" stroke={D} strokeWidth="1.200" />
        <path d="M9.500 0l5 3.500-5 3.500z" fill={B} />
      </svg>
    </button>
    <span className="mt-[7px] flex">
      <Caret />
    </span>
    <span className="mt-[5px] w-[23px] border-t border-[#555]"></span>
    <button aria-label="显示设置" className="mt-[5px] h-[22px]">
      <svg className="w-[22px] h-[22px]" viewBox="0 0 22 22" fill="none">
        <path d="M9 20.500H2.500q-1 0-1-1v-17q0-1 1-1h17q1 0 1 1V12M5 6.500h2M9 6.500h8M5 10.500h2M9 10.500h8M5 14.500h2M9 14.500h3" stroke={D} />
        <path d="M12 17.500c2.500-4.500 6.500-4.500 9 0-2.500 4-6.500 4-9 0z" stroke={B} fill="#fff" />
        <circle cx="16.500" cy="17.500" r="1.300" stroke={B} />
      </svg>
    </button>
  </div>
);

const Handle = () => (
  <div className="flex flex-col items-center justify-center w-1 h-[100px] mt-[376px] bg-[#5a6470] shrink-0">
    <svg className="w-[3px] h-[6px]" viewBox="0 0 3 6" aria-hidden="true">
      <path d="M3 0v6L0 3z" fill="#c8ccd0" />
    </svg>
  </div>
);

const floors = ["屋面层", "第3层", "第2层", "首层", "基础层"];

const DisplayPanel = () => (
  <aside className="flex flex-col w-[134px] overflow-hidden shrink-0">
    <PanelBar name="" />
    <h2 className="h-[22px] pl-[9px] leading-[22px] bg-[#f0f0f0] border-b border-[#dedede] text-[#777]">显示设置</h2>
    <div className="flex items-end gap-[3px] h-[27px] pl-[3px] border-b border-[#d0d0d0] shrink-0" role="tablist">
      <button
        role="tab"
        aria-selected="true"
        className="w-[62px] h-[23px] pt-px border border-b-0 border-[#c8ccd2] rounded-t-[4px] text-[#2a7de1] whitespace-nowrap shrink-0"
      >
        楼层显示
      </button>
      <button role="tab" aria-selected="false" className="w-[60px] h-[21px] rounded-t-[3px] bg-[#dedede] whitespace-nowrap shrink-0">
        分层显示
      </button>
      <span className="w-4 h-[21px] rounded-t-[3px] bg-[#dedede] shrink-0"></span>
    </div>
    <div className="flex items-center h-[29px] pl-2 text-black whitespace-nowrap">
      <label className="flex items-center gap-[6px] w-[90px] shrink-0">
        <input
          type="radio"
          name="floor"
          defaultChecked
          className="appearance-none w-[14px] h-[14px] rounded-full border border-[#777] checked:bg-[radial-gradient(circle,#2a7de1_0_3px,#fff_4px)] shrink-0"
        />
        当前楼层
      </label>
      <label className="flex items-center gap-[6px] shrink-0">
        <input
          type="radio"
          name="floor"
          className="appearance-none w-[14px] h-[14px] rounded-full border border-[#777] checked:bg-[radial-gradient(circle,#2a7de1_0_3px,#fff_4px)] shrink-0"
        />
        相邻楼层
      </label>
    </div>
    <ul className="flex-1 pt-[2px] border-l border-t border-[#c4c8cc] text-[#777]">
      <li className="flex items-center gap-[7px] h-6 pl-[11px]">
        <Caret />
        <Check id="all" disabled partial />
        <label htmlFor="all">全部楼层</label>
      </li>
      {floors.map((f) => (
        <li key={f} className="flex items-center gap-[7px] h-6 pl-[45px]">
          <Check id={f} disabled initial={f === "首层"} />
          <label htmlFor={f}>{f}</label>
        </li>
      ))}
    </ul>
  </aside>
);

export default function App() {
  return (
    <div className="flex flex-col h-screen overflow-hidden bg-white text-[12px] text-[#303133] font-['Noto_Sans','Noto_Sans_CJK_SC',sans-serif]">
      <MenuBar />
      <Ribbon />
      <ComboBar />
      <main className="flex flex-1 min-h-0">
        <NavPanel />
        <div className="flex flex-col w-[448px] ml-1 shrink-0">
          <ComponentPanel />
          <PropertyPanel />
        </div>
        <Handle />
        <div className="relative flex-1 min-w-0 bg-black overflow-hidden">
          <Drawing />
          <ViewTools />
        </div>
        <Handle />
        <DisplayPanel />
      </main>
    </div>
  );
}
